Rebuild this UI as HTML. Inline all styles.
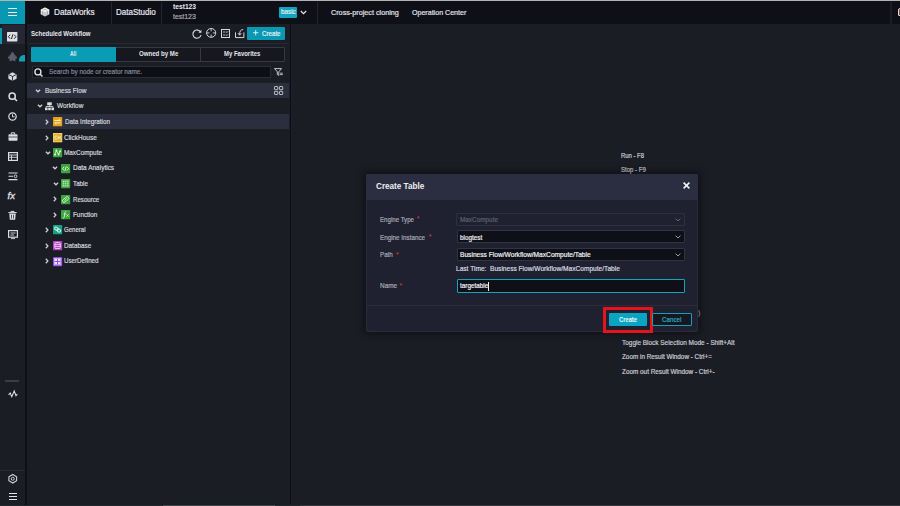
<!DOCTYPE html>
<html><head><meta charset="utf-8">
<style>
html,body{margin:0;padding:0}
body{width:900px;height:506px;overflow:hidden;position:relative;background:#1b1d25;font-family:"Liberation Sans",sans-serif}
.b{position:absolute;box-sizing:border-box}
.t{position:absolute;white-space:pre;line-height:1;transform-origin:0 0;font-family:"Liberation Sans",sans-serif}
svg{position:absolute;overflow:visible}
</style></head><body>
<!-- header -->
<div class="b" style="left:0;top:0;width:900px;height:1px;background:#b3b3b3"></div>
<div class="b" style="left:0;top:1px;width:900px;height:23px;background:#0e0f17"></div>
<div class="b" style="left:0;top:1px;width:24.5px;height:23px;background:#0898b2"></div>
<div class="b" style="left:8px;top:8.4px;width:9px;height:1.1px;background:#ececec"></div>
<div class="b" style="left:8px;top:11.55px;width:9px;height:1.1px;background:#ececec"></div>
<div class="b" style="left:8px;top:15px;width:9px;height:1.1px;background:#ececec"></div>
<div class="b" style="left:111px;top:2px;width:1px;height:22px;background:#24262e"></div>
<div class="b" style="left:161px;top:2px;width:1px;height:22px;background:#24262e"></div>
<div class="b" style="left:317px;top:2px;width:1px;height:22px;background:#24262e"></div>
<div class="b" style="left:890.2px;top:2px;width:2.2px;height:22px;background:#1b1c25"></div>
<svg style="left:40px;top:7px" width="10" height="10" viewBox="0 0 10 10"><path d="M5 0.4 L9.3 2.8 V7.2 L5 9.6 L0.7 7.2 V2.8 Z" fill="#eeeae4"/><path d="M5 0.4 L9.3 2.8 L5 5 L0.7 2.8Z" fill="#f6f4f0"/><path d="M2.4 3.9V7.9M4 4.8V9M6 4.8V9M7.6 3.9V7.9" stroke="#7b8aa0" stroke-width="0.7"/><path d="M3 3.2 L5 2.2 L7 3.2" stroke="#9a7a60" stroke-width="0.6" fill="none"/></svg>
<div class="b" style="left:279px;top:6.7px;width:18.3px;height:11.3px;background:#12a3bf;border-radius:1px"></div>
<svg style="left:300px;top:9.5px" width="7" height="5" viewBox="0 0 7 5"><path d="M0.8 1 L3.5 3.6 L6.2 1" stroke="#e8e8e8" stroke-width="1.2" fill="none"/></svg>
<div class="b" style="left:897.6px;top:8.2px;width:4px;height:7.7px;background:#8a4a2a;border:1px solid #d8dde6;border-radius:2px 0 0 1px"></div>

<!-- sidebar -->
<div class="b" style="left:0;top:24px;width:25px;height:482px;background:#1b1d25"></div>
<div class="b" style="left:2px;top:25px;width:23px;height:19px;background:#252834"></div>
<div class="b" style="left:0;top:28px;width:2px;height:16px;background:#0a9bb5"></div>
<div class="b" style="left:25px;top:24px;width:2px;height:482px;background:#0f1016"></div>
<div class="b" style="left:5px;top:380px;width:14px;height:1.5px;background:#3a3c48"></div>
<div class="b" style="left:0;top:470px;width:25px;height:1px;background:#272933"></div>
<!-- sidebar icons -->
<svg style="left:7px;top:31.7px" width="10.4" height="9.4" viewBox="0 0 10.4 9.4"><rect x="0" y="0" width="10.4" height="9.4" rx="0.6" fill="#dfe0e6"/><path d="M3.2 2.7 L1.4 4.7 L3.2 6.7 M7.2 2.7 L9 4.7 L7.2 6.7 M5.9 2.4 L4.5 7" stroke="#1e2030" stroke-width="1" fill="none"/></svg>
<svg style="left:7.7px;top:51.8px" width="9" height="9.4" viewBox="0 0 9 9.4"><g fill="#5c5e6d"><rect x="1.6" y="2.6" width="5.8" height="6.6"/><circle cx="4.5" cy="1.7" r="1.5"/><circle cx="1.3" cy="5.6" r="1.3"/><circle cx="7.7" cy="5.6" r="1.3"/></g><circle cx="4.5" cy="9.6" r="1.3" fill="#1b1d25"/></svg><svg style="left:18.6px;top:54.6px" width="6" height="6.4" viewBox="0 0 6 6.4"><path d="M0 6.4 V5 A5 5 0 0 1 5 0 H6 V6.4Z" fill="#12a0b8"/></svg>
<svg style="left:8px;top:71.5px" width="9" height="9" viewBox="0 0 9 9"><path d="M4.5 0.3 L8.6 2.4 V6.7 L4.5 8.8 L0.4 6.7 V2.4Z" fill="#d8d9e0"/><path d="M0.8 2.6 L4.5 4.5 L8.2 2.6 M4.5 4.5 V8.5" stroke="#1b1d25" stroke-width="0.9" fill="none"/></svg>
<svg style="left:8px;top:91.5px" width="10" height="10" viewBox="0 0 10 10"><circle cx="4.2" cy="4.2" r="3.1" stroke="#dcdde3" stroke-width="1.5" fill="none"/><path d="M6.5 6.5 L9 9" stroke="#dcdde3" stroke-width="1.6"/></svg>
<svg style="left:8px;top:111.5px" width="9" height="9" viewBox="0 0 9 9"><circle cx="4.5" cy="4.5" r="3.7" stroke="#dcdde3" stroke-width="1.2" fill="none"/><path d="M4.5 2.3 V4.8 H6.6" stroke="#dcdde3" stroke-width="1" fill="none"/></svg>
<svg style="left:7.5px;top:132px" width="10" height="9" viewBox="0 0 10 9"><rect x="0.5" y="2.2" width="9" height="6.5" rx="0.8" fill="#dcdde3"/><path d="M3.3 2.2 V0.8 H6.7 V2.2" stroke="#dcdde3" stroke-width="1" fill="none"/><path d="M0.5 5 H9.5" stroke="#1b1d25" stroke-width="0.7"/></svg>
<svg style="left:7.5px;top:151.5px" width="10" height="9" viewBox="0 0 10 9"><rect x="0.6" y="0.6" width="8.8" height="7.8" stroke="#dcdde3" stroke-width="1.2" fill="none"/><path d="M0.6 3 H9.4 M0.6 5.3 H9.4 M3.5 3 V8.4" stroke="#dcdde3" stroke-width="0.9"/></svg>
<svg style="left:7.5px;top:171.5px" width="10" height="9" viewBox="0 0 10 9"><path d="M0.5 1 H9.5 M0.5 4.3 H5 M0.5 7.6 H9.5" stroke="#dcdde3" stroke-width="1.1"/><circle cx="7.5" cy="4.3" r="1.4" stroke="#dcdde3" stroke-width="0.9" fill="none"/></svg>
<div class="t" style="left:7.5px;top:191px;font-size:9.5px;font-style:italic;color:#e2e3e8;-webkit-text-stroke:0.3px #e2e3e8;font-family:'Liberation Sans',sans-serif">fx</div>
<svg style="left:8px;top:210.5px" width="9" height="9" viewBox="0 0 9 9"><path d="M0.3 1.6 H8.7 M3 1.6 V0.4 H6 V1.6" stroke="#dcdde3" stroke-width="1" fill="none"/><path d="M1.3 2.6 H7.7 L7.2 8.8 H1.8Z" fill="#dcdde3"/><path d="M3.5 3.8 V7.5 M5.5 3.8 V7.5" stroke="#1b1d25" stroke-width="0.7"/></svg>
<svg style="left:7.5px;top:229.5px" width="10" height="9" viewBox="0 0 10 9"><rect x="0.6" y="0.6" width="8.8" height="6.6" stroke="#dcdde3" stroke-width="1.2" fill="none"/><path d="M2.5 3 H7.5 M2.5 5 H6 M3 8.6 H7" stroke="#dcdde3" stroke-width="0.9"/></svg>
<svg style="left:7.5px;top:389.5px" width="10" height="8" viewBox="0 0 10 8"><path d="M0.6 4.8 L2.2 3 L3.8 6.6 L6.2 1 L8 5.6 L9.4 4" stroke="#dcdde3" stroke-width="1.1" fill="none"/></svg>
<svg style="left:7.8px;top:474.2px" width="9.5" height="9.5" viewBox="0 0 9.5 9.5"><path d="M4.75 0.5 L8.6 2.7 V6.8 L4.75 9 L0.9 6.8 V2.7Z" stroke="#d0d1d8" stroke-width="1.1" fill="none"/><circle cx="4.75" cy="4.75" r="1.5" stroke="#d0d1d8" stroke-width="1" fill="none"/></svg>
<div class="b" style="left:8.5px;top:493.4px;width:8px;height:1.1px;background:#e4e5ea"></div><div class="b" style="left:8.5px;top:496px;width:8px;height:1.1px;background:#e4e5ea"></div><div class="b" style="left:8.5px;top:498.6px;width:8px;height:1.1px;background:#e4e5ea"></div>

<!-- panel -->
<div class="b" style="left:27px;top:43px;width:262px;height:1px;background:#262833"></div>
<div class="b" style="left:288.6px;top:24px;width:4px;height:482px;background:#1c1d29"></div><div class="b" style="left:289.6px;top:24px;width:1.9px;height:482px;background:#0d0e14"></div>
<svg style="left:191.5px;top:28.5px" width="10" height="10" viewBox="0 0 10 10"><path d="M8.6 3.2 A4.1 4.1 0 1 0 9 6" stroke="#d8d9df" stroke-width="1.1" fill="none"/><path d="M9.4 0.8 V3.8 H6.4Z" fill="#d8d9df"/></svg>
<svg style="left:205.9px;top:28.2px" width="10.3" height="9.8" viewBox="0 0 10.3 9.8"><ellipse cx="5.15" cy="4.9" rx="4.6" ry="4.4" stroke="#d8d9df" stroke-width="1" fill="none"/><path d="M5.15 0.5 V3.3 M5.15 6.5 V9.3 M0.5 4.9 H3.4 M6.9 4.9 H9.8" stroke="#d8d9df" stroke-width="0.9"/></svg>
<svg style="left:221px;top:28.8px" width="9" height="9" viewBox="0 0 9 9"><rect x="0.5" y="0.5" width="8" height="8" stroke="#d8d9df" stroke-width="1" fill="none"/><path d="M2 3 H4.5 M2 6 H4.5 M5.2 2.8 L6 3.6 L7.2 2.2 M5.2 5.8 L6 6.6 L7.2 5.2" stroke="#d8d9df" stroke-width="0.8" fill="none"/></svg>
<svg style="left:234.8px;top:28.8px" width="9.4" height="9.2" viewBox="0 0 9.4 9.2"><path d="M0.5 3.4 V8.6 H8.9 V3.4" stroke="#d8d9df" stroke-width="1" fill="none"/><path d="M8.2 0.6 C5.8 0.6 4.6 2 4.6 5.6 M3 4.2 L4.6 6.2 L6.2 4.2" stroke="#d8d9df" stroke-width="1" fill="none"/></svg>
<div class="b" style="left:247px;top:27px;width:38px;height:13px;background:#0a98b3;border-radius:1px"></div>
<svg style="left:253px;top:30.3px" width="5.4" height="5.4" viewBox="0 0 5.4 5.4"><path d="M2.7 0 V5.4 M0 2.7 H5.4" stroke="#e6f4f8" stroke-width="0.9"/></svg>
<!-- tabs -->
<div class="b" style="left:31px;top:47.3px;width:254px;height:14.5px;background:#16171f;border:1px solid #363845;border-radius:1px"></div>
<div class="b" style="left:31px;top:47.3px;width:85px;height:14.5px;background:#0a9bb5;border-radius:1px 0 0 1px"></div>
<div class="b" style="left:200.3px;top:47.3px;width:1px;height:14.5px;background:#363845"></div>
<!-- search -->
<div class="b" style="left:31.5px;top:65.5px;width:239px;height:12.7px;background:#0e0f16;border:1px solid #2a2c37"></div>
<svg style="left:34px;top:67.5px" width="9" height="9" viewBox="0 0 9 9"><circle cx="3.9" cy="3.9" r="3" stroke="#e0e1e6" stroke-width="1.4" fill="none"/><path d="M6 6 L8.5 8.5" stroke="#e0e1e6" stroke-width="1.5"/></svg>
<svg style="left:273.5px;top:68px" width="9" height="8" viewBox="0 0 9 8"><path d="M0.5 0.6 H7.5 L4.8 3.8 V7.4 L3.3 6.4 V3.8Z" stroke="#d8d9df" stroke-width="0.9" fill="none"/><path d="M6 5.2 H8.8 M6 6.6 H8.8" stroke="#d8d9df" stroke-width="0.8"/></svg>
<!-- tree -->
<div class="b" style="left:27px;top:83px;width:262px;height:15.4px;background:#2b2e3c"></div>
<div class="b" style="left:27px;top:113.8px;width:262px;height:15.3px;background:#2b2e3c"></div>
<svg style="left:273.6px;top:86.3px" width="9.2" height="9" viewBox="0 0 9.2 9"><g stroke="#cfd0d7" stroke-width="0.9" fill="none"><rect x="0.5" y="0.5" width="3.3" height="3.2" rx="0.6"/><rect x="5.4" y="0.5" width="3.3" height="3.2" rx="0.6"/><rect x="0.5" y="5.3" width="3.3" height="3.2" rx="0.6"/><rect x="5.4" y="5.3" width="3.3" height="3.2" rx="0.6"/></g></svg>
<!-- chevrons down -->
<svg style="left:34.6px;top:88.8px" width="6" height="4" viewBox="0 0 6 4"><path d="M0.9 0.7 L3 2.8 L5.1 0.7" stroke="#d0d1d8" stroke-width="1.25" fill="none"/></svg>
<svg style="left:36.9px;top:104.3px" width="6" height="4" viewBox="0 0 6 4"><path d="M0.9 0.7 L3 2.8 L5.1 0.7" stroke="#d0d1d8" stroke-width="1.25" fill="none"/></svg>
<svg style="left:44.8px;top:150.9px" width="6" height="4" viewBox="0 0 6 4"><path d="M0.9 0.7 L3 2.8 L5.1 0.7" stroke="#d0d1d8" stroke-width="1.25" fill="none"/></svg>
<svg style="left:52.3px;top:166.4px" width="6" height="4" viewBox="0 0 6 4"><path d="M0.9 0.7 L3 2.8 L5.1 0.7" stroke="#d0d1d8" stroke-width="1.25" fill="none"/></svg>
<svg style="left:52.6px;top:181.9px" width="6" height="4" viewBox="0 0 6 4"><path d="M0.9 0.7 L3 2.8 L5.1 0.7" stroke="#d0d1d8" stroke-width="1.25" fill="none"/></svg>
<!-- chevrons right -->
<svg style="left:45.4px;top:119px" width="4" height="6" viewBox="0 0 4 6"><path d="M0.8 0.8 L2.9 3 L0.8 5.2" stroke="#d0d1d8" stroke-width="1.25" fill="none"/></svg>
<svg style="left:45.4px;top:134.5px" width="4" height="6" viewBox="0 0 4 6"><path d="M0.8 0.8 L2.9 3 L0.8 5.2" stroke="#d0d1d8" stroke-width="1.25" fill="none"/></svg>
<svg style="left:52.6px;top:196.4px" width="4" height="6" viewBox="0 0 4 6"><path d="M0.8 0.8 L2.9 3 L0.8 5.2" stroke="#d0d1d8" stroke-width="1.25" fill="none"/></svg>
<svg style="left:52.6px;top:211.9px" width="4" height="6" viewBox="0 0 4 6"><path d="M0.8 0.8 L2.9 3 L0.8 5.2" stroke="#d0d1d8" stroke-width="1.25" fill="none"/></svg>
<svg style="left:45.2px;top:227.3px" width="4" height="6" viewBox="0 0 4 6"><path d="M0.8 0.8 L2.9 3 L0.8 5.2" stroke="#d0d1d8" stroke-width="1.25" fill="none"/></svg>
<svg style="left:45.2px;top:242.8px" width="4" height="6" viewBox="0 0 4 6"><path d="M0.8 0.8 L2.9 3 L0.8 5.2" stroke="#d0d1d8" stroke-width="1.25" fill="none"/></svg>
<svg style="left:45.2px;top:258.3px" width="4" height="6" viewBox="0 0 4 6"><path d="M0.8 0.8 L2.9 3 L0.8 5.2" stroke="#d0d1d8" stroke-width="1.25" fill="none"/></svg>
<!-- workflow icon -->
<svg style="left:45px;top:101.8px" width="9" height="8.4" viewBox="0 0 9 8.4"><rect x="2.2" y="0.3" width="4.6" height="3" fill="#dcdde3"/><path d="M4.5 3.3 V4.8 M1 5.4 V4.6 H8 V5.4" stroke="#dcdde3" stroke-width="0.9" fill="none"/><rect x="0" y="5.6" width="2.6" height="2.6" fill="#dcdde3"/><rect x="3.2" y="5.6" width="2.6" height="2.6" fill="#dcdde3"/><rect x="6.4" y="5.6" width="2.6" height="2.6" fill="#dcdde3"/></svg>
<!-- node icons -->
<svg style="left:53px;top:117px" width="9.2" height="9.2" viewBox="0 0 9 9"><rect width="9" height="9" rx="0.5" fill="#e7a11b"/><path d="M1.5 3.4 H7.3 M5.8 2 L7.3 3.4 M7.5 5.8 H1.7 M3.2 7.2 L1.7 5.8" stroke="#fdf1d8" stroke-width="0.9" fill="none"/></svg>
<svg style="left:53px;top:132.8px" width="9.2" height="9.2" viewBox="0 0 9 9"><rect width="9" height="9" rx="0.6" fill="#e0b32a"/><rect x="0.4" y="0.4" width="8.2" height="8.2" stroke="#f2d985" stroke-width="0.7" fill="none"/><path d="M2 3 H4 M2 3 V6 H4 M5 3 V6 M7 3 V6 M5 4.5 H7" stroke="#fbeec0" stroke-width="0.8" fill="none"/></svg>
<svg style="left:53px;top:148.3px" width="9.2" height="9.2" viewBox="0 0 9 9"><rect width="9" height="9" rx="0.6" fill="#3aa63a"/><path d="M2 6.5 L3.3 2.3 L5.5 6.3 L7 3.2" stroke="#e8f6e8" stroke-width="0.8" fill="none"/><g fill="#f0faf0"><circle cx="2" cy="6.5" r="0.9"/><circle cx="3.3" cy="2.3" r="0.9"/><circle cx="5.5" cy="6.3" r="0.9"/><circle cx="7" cy="3.2" r="0.9"/></g></svg>
<svg style="left:61px;top:163.7px" width="9.2" height="9.2" viewBox="0 0 9 9"><rect width="9" height="9" rx="0.6" fill="#3aa63a"/><path d="M3 2.8 L1.6 4.5 L3 6.2 M6 2.8 L7.4 4.5 L6 6.2 M5.1 2.4 L3.9 6.6" stroke="#eef8ee" stroke-width="0.9" fill="none"/></svg>
<svg style="left:61px;top:179.2px" width="9.2" height="9.2" viewBox="0 0 9 9"><rect width="9" height="9" rx="0.6" fill="#3aa63a"/><rect x="1.6" y="1.6" width="5.8" height="5.8" fill="#b9e0b9"/><path d="M3.55 1.6 V7.4 M5.45 1.6 V7.4 M1.6 3.55 H7.4 M1.6 5.45 H7.4" stroke="#3aa63a" stroke-width="0.55"/></svg>
<svg style="left:61px;top:194.7px" width="9.2" height="9.2" viewBox="0 0 9 9"><rect width="9" height="9" rx="0.6" fill="#3aa63a"/><g transform="rotate(-40 4.5 4.5)" stroke="#d6eed6" stroke-width="0.9" fill="none"><rect x="1" y="3" width="7" height="3" rx="1.5"/><path d="M3 4.5 H6"/></g></svg>
<svg style="left:61px;top:210.2px" width="9.2" height="9.2" viewBox="0 0 9 9"><rect width="9" height="9" rx="0.6" fill="#3aa63a"/><path d="M5 1.5 C4 1.3 3.8 2.2 3.6 4 L3.2 7 C3 7.9 2.5 8 1.8 7.8 M2.5 3.8 H4.8" stroke="#e0f2e0" stroke-width="0.8" fill="none"/><path d="M5.3 4.3 L7.3 6.5 M7.3 4.3 L5.3 6.5" stroke="#e0f2e0" stroke-width="0.8"/></svg>
<svg style="left:53px;top:225.4px" width="9.2" height="9.2" viewBox="0 0 9 9"><rect width="9" height="9" rx="0.6" fill="#16a287"/><g transform="rotate(35 4.5 4.5)" stroke="#def4ed" stroke-width="0.95" fill="none"><ellipse cx="3.1" cy="4.5" rx="1.9" ry="1.4"/><ellipse cx="5.9" cy="4.5" rx="1.9" ry="1.4"/></g></svg>
<svg style="left:53px;top:241px" width="9.2" height="9.2" viewBox="0 0 9 9"><rect width="9" height="9" rx="0.6" fill="#b344c2"/><rect x="1.8" y="1.6" width="5.4" height="5.8" rx="1" stroke="#f2dcf5" stroke-width="0.85" fill="none"/><path d="M1.8 3.55 H7.2 M1.8 5.45 H7.2" stroke="#f2dcf5" stroke-width="0.8"/></svg>
<svg style="left:53px;top:256.6px" width="9.2" height="9.2" viewBox="0 0 9 9"><rect width="9" height="9" rx="0.6" fill="#8b49dc"/><rect x="1.3" y="1.3" width="6.4" height="6.4" stroke="#d9c8f6" stroke-width="0.7" fill="none"/><path d="M1.8 1.8 H4 V4 H1.8Z M5 1.8 H7.2 V4 H5Z M1.8 5 H4 V7.2 H1.8Z M5 5 H7.2 V7.2 H5Z" fill="#ece2fb"/></svg>

<!-- main area scrollbar -->
<div class="b" style="left:0;top:505px;width:900px;height:1px;background:#34363b"></div><div class="b" style="left:0;top:505px;width:300px;height:1px;background:#1d2a30"></div><div class="b" style="left:163px;top:505px;width:112px;height:1px;background:#3e454b"></div>
<div class="t" style="left:698px;top:309.3px;font-size:7px;color:#c4c5cc">)</div>

<div class="t" style="left:54.20px;top:8.30px;font-size:9px;font-weight:400;color:#e8e8ee;-webkit-text-stroke:0.2px #e8e8ee;transform:scaleX(0.914)">DataWorks</div>
<div class="t" style="left:116.00px;top:8.30px;font-size:9px;font-weight:400;color:#e8e8ee;-webkit-text-stroke:0.2px #e8e8ee;transform:scaleX(0.893)">DataStudio</div>
<div class="t" style="left:173.20px;top:3.30px;font-size:7px;font-weight:700;color:#ececf0;-webkit-text-stroke:0.0px #ececf0;transform:scaleX(0.954)">test123</div>
<div class="t" style="left:173.20px;top:13.10px;font-size:7px;font-weight:400;color:#a8a9b0;-webkit-text-stroke:0.2px #a8a9b0;transform:scaleX(0.996)">test123</div>
<div class="t" style="left:280.50px;top:8.40px;font-size:7.5px;font-weight:400;color:#e2edf2;-webkit-text-stroke:0.2px #e2edf2;transform:scaleX(0.844)">basic</div>
<div class="t" style="left:331.10px;top:8.50px;font-size:7.5px;font-weight:400;color:#e0e1e6;-webkit-text-stroke:0.2px #e0e1e6;transform:scaleX(0.963)">Cross-project cloning</div>
<div class="t" style="left:412.30px;top:8.50px;font-size:7.5px;font-weight:400;color:#e0e1e6;-webkit-text-stroke:0.2px #e0e1e6;transform:scaleX(0.943)">Operation Center</div>
<div class="t" style="left:31.10px;top:29.50px;font-size:7.5px;font-weight:700;color:#e6e7ec;-webkit-text-stroke:0.0px #e6e7ec;transform:scaleX(0.809)">Scheduled Workflow</div>
<div class="t" style="left:261.60px;top:29.50px;font-size:7.5px;font-weight:400;color:#e6f4f8;-webkit-text-stroke:0.2px #e6f4f8;transform:scaleX(0.823)">Create</div>
<div class="t" style="left:70.30px;top:50.10px;font-size:7px;font-weight:700;color:#e0ecf0;-webkit-text-stroke:0.0px #e0ecf0;transform:scaleX(0.711)">All</div>
<div class="t" style="left:138.60px;top:50.30px;font-size:7px;font-weight:700;color:#e4e5ea;-webkit-text-stroke:0.0px #e4e5ea;transform:scaleX(0.871)">Owned by Me</div>
<div class="t" style="left:224.20px;top:50.30px;font-size:7px;font-weight:700;color:#e4e5ea;-webkit-text-stroke:0.0px #e4e5ea;transform:scaleX(0.851)">My Favorites</div>
<div class="t" style="left:49.20px;top:67.90px;font-size:7px;font-weight:400;color:#85889a;-webkit-text-stroke:0.2px #85889a;transform:scaleX(0.909)">Search by node or creator name.</div>
<div class="t" style="left:44.50px;top:86.80px;font-size:7px;font-weight:400;color:#d4d5dc;-webkit-text-stroke:0.2px #d4d5dc;transform:scaleX(0.918)">Business Flow</div>
<div class="t" style="left:57.00px;top:102.30px;font-size:7px;font-weight:400;color:#d4d5dc;-webkit-text-stroke:0.2px #d4d5dc;transform:scaleX(0.917)">Workflow</div>
<div class="t" style="left:64.70px;top:117.80px;font-size:7px;font-weight:400;color:#d4d5dc;-webkit-text-stroke:0.2px #d4d5dc;transform:scaleX(0.904)">Data Integration</div>
<div class="t" style="left:64.20px;top:133.60px;font-size:7px;font-weight:400;color:#d4d5dc;-webkit-text-stroke:0.2px #d4d5dc;transform:scaleX(0.926)">ClickHouse</div>
<div class="t" style="left:64.20px;top:149.00px;font-size:7px;font-weight:400;color:#d4d5dc;-webkit-text-stroke:0.2px #d4d5dc;transform:scaleX(0.912)">MaxCompute</div>
<div class="t" style="left:72.50px;top:164.40px;font-size:7px;font-weight:400;color:#d4d5dc;-webkit-text-stroke:0.2px #d4d5dc;transform:scaleX(0.927)">Data Analytics</div>
<div class="t" style="left:72.50px;top:179.70px;font-size:7px;font-weight:400;color:#d4d5dc;-webkit-text-stroke:0.2px #d4d5dc;transform:scaleX(0.894)">Table</div>
<div class="t" style="left:72.50px;top:195.50px;font-size:7px;font-weight:400;color:#d4d5dc;-webkit-text-stroke:0.2px #d4d5dc;transform:scaleX(0.877)">Resource</div>
<div class="t" style="left:72.50px;top:211.00px;font-size:7px;font-weight:400;color:#d4d5dc;-webkit-text-stroke:0.2px #d4d5dc;transform:scaleX(0.904)">Function</div>
<div class="t" style="left:64.20px;top:226.20px;font-size:7px;font-weight:400;color:#d4d5dc;-webkit-text-stroke:0.2px #d4d5dc;transform:scaleX(0.864)">General</div>
<div class="t" style="left:64.20px;top:241.80px;font-size:7px;font-weight:400;color:#d4d5dc;-webkit-text-stroke:0.2px #d4d5dc;transform:scaleX(0.907)">Database</div>
<div class="t" style="left:64.20px;top:257.20px;font-size:7px;font-weight:400;color:#d4d5dc;-webkit-text-stroke:0.2px #d4d5dc;transform:scaleX(0.887)">UserDefined</div>
<div class="t" style="left:621.30px;top:151.50px;font-size:7px;font-weight:400;color:#cbccd3;-webkit-text-stroke:0.2px #cbccd3;transform:scaleX(0.844)">Run - F8</div>
<div class="t" style="left:621.30px;top:165.70px;font-size:7px;font-weight:400;color:#cbccd3;-webkit-text-stroke:0.2px #cbccd3;transform:scaleX(0.862)">Stop - F9</div>
<div class="t" style="left:621.60px;top:339.10px;font-size:7px;font-weight:400;color:#cbccd3;-webkit-text-stroke:0.2px #cbccd3;transform:scaleX(0.920)">Toggle Block Selection Mode - Shift+Alt</div>
<div class="t" style="left:621.60px;top:353.30px;font-size:7px;font-weight:400;color:#cbccd3;-webkit-text-stroke:0.2px #cbccd3;transform:scaleX(0.906)">Zoom in Result Window - Ctrl+=</div>
<div class="t" style="left:621.60px;top:367.50px;font-size:7px;font-weight:400;color:#cbccd3;-webkit-text-stroke:0.2px #cbccd3;transform:scaleX(0.910)">Zoom out Result Window - Ctrl+-</div>

<!-- modal -->
<div class="b" style="left:365.8px;top:173.8px;width:332.6px;height:158.6px;background:#1f2130;border:1px solid #2a2c3a;border-radius:2px;box-shadow:0 0 10px 2px rgba(0,0,0,0.45)"></div>
<div class="b" style="left:365.8px;top:173.8px;width:332.6px;height:26.2px;background:#2b2e40;border-radius:2px 2px 0 0"></div>
<div class="b" style="left:366.5px;top:304.8px;width:331.5px;height:1.4px;background:#2a2c3b"></div>
<svg style="left:683.3px;top:181.8px" width="7" height="7" viewBox="0 0 7 7"><path d="M0.6 0.6 L6.4 6.4 M6.4 0.6 L0.6 6.4" stroke="#f4f4f6" stroke-width="1.5"/></svg>
<div class="b" style="left:456.2px;top:213px;width:228.5px;height:12.8px;background:#1f2130;border:1px solid #2e313d;border-radius:1px"></div>
<div class="b" style="left:456.5px;top:230.4px;width:228.2px;height:13px;background:#0f1017;border:1px solid #313442;border-radius:1px"></div>
<div class="b" style="left:456.5px;top:248.3px;width:228.2px;height:13px;background:#0f1017;border:1px solid #313442;border-radius:1px"></div>
<div class="b" style="left:456.5px;top:279.4px;width:228.2px;height:13.3px;background:#0f1017;border:1px solid #17a2be;border-radius:1px"></div>
<div class="b" style="left:488.2px;top:281.5px;width:0.9px;height:9.5px;background:#f0f0f0"></div>
<svg style="left:674.5px;top:217.8px" width="6" height="4" viewBox="0 0 6 4"><path d="M0.6 0.6 L3 3 L5.4 0.6" stroke="#6a6d7a" stroke-width="0.9" fill="none"/></svg>
<svg style="left:674.5px;top:235.3px" width="6" height="4" viewBox="0 0 6 4"><path d="M0.6 0.6 L3 3 L5.4 0.6" stroke="#a9abb5" stroke-width="0.9" fill="none"/></svg>
<svg style="left:674.5px;top:253.2px" width="6" height="4" viewBox="0 0 6 4"><path d="M0.6 0.6 L3 3 L5.4 0.6" stroke="#a9abb5" stroke-width="0.9" fill="none"/></svg>
<!-- asterisks -->
<div class="t" style="left:416.8px;top:215px;font-size:7px;color:#e03a42">*</div>
<div class="t" style="left:428.8px;top:233px;font-size:7px;color:#e03a42">*</div>
<div class="t" style="left:396px;top:251px;font-size:7px;color:#e03a42">*</div>
<div class="t" style="left:399.5px;top:281.5px;font-size:7px;color:#e03a42">*</div>
<!-- buttons -->
<div class="b" style="left:602.8px;top:306.8px;width:50px;height:26px;border:3px solid #e5141c"></div>
<div class="b" style="left:608.9px;top:313px;width:38.3px;height:13.3px;background:#0aa5c3;border-radius:1px"></div>
<div class="b" style="left:652.2px;top:313px;width:39.5px;height:13px;background:#17181f;border:1px solid #16a0bc;border-radius:1px"></div>
<div class="t" style="left:375.50px;top:182.20px;font-size:9px;font-weight:700;color:#eceef2;-webkit-text-stroke:0.0px #eceef2;transform:scaleX(0.904)">Create Table</div>
<div class="t" style="left:380.10px;top:215.90px;font-size:7.5px;font-weight:400;color:#a8aab5;-webkit-text-stroke:0.2px #a8aab5;transform:scaleX(0.817)">Engine Type</div>
<div class="t" style="left:380.10px;top:233.70px;font-size:7.5px;font-weight:400;color:#a8aab5;-webkit-text-stroke:0.2px #a8aab5;transform:scaleX(0.837)">Engine Instance</div>
<div class="t" style="left:380.10px;top:251.30px;font-size:7.5px;font-weight:400;color:#a8aab5;-webkit-text-stroke:0.2px #a8aab5;transform:scaleX(0.827)">Path</div>
<div class="t" style="left:380.10px;top:282.00px;font-size:7.5px;font-weight:400;color:#a8aab5;-webkit-text-stroke:0.2px #a8aab5;transform:scaleX(0.855)">Name</div>
<div class="t" style="left:460.10px;top:215.90px;font-size:7.5px;font-weight:400;color:#5e6170;-webkit-text-stroke:0.2px #5e6170;transform:scaleX(0.851)">MaxCompute</div>
<div class="t" style="left:460.10px;top:233.70px;font-size:7.5px;font-weight:400;color:#f2f2f6;-webkit-text-stroke:0.2px #f2f2f6;transform:scaleX(0.848)">blogtest</div>
<div class="t" style="left:460.30px;top:251.10px;font-size:7.5px;font-weight:400;color:#f2f2f6;-webkit-text-stroke:0.2px #f2f2f6;transform:scaleX(0.884)">Business Flow/Workflow/MaxCompute/Table</div>
<div class="t" style="left:456.30px;top:264.60px;font-size:7.5px;font-weight:400;color:#dadbe2;-webkit-text-stroke:0.2px #dadbe2;transform:scaleX(0.878)">Last Time:  Business Flow/Workflow/MaxCompute/Table</div>
<div class="t" style="left:460.30px;top:282.00px;font-size:7.5px;font-weight:400;color:#f2f2f6;-webkit-text-stroke:0.2px #f2f2f6;transform:scaleX(0.848)">targetable</div>
<div class="t" style="left:619.00px;top:316.00px;font-size:7.5px;font-weight:700;color:#f0f7fa;-webkit-text-stroke:0.0px #f0f7fa;transform:scaleX(0.771)">Create</div>
<div class="t" style="left:662.30px;top:316.00px;font-size:7.5px;font-weight:400;color:#26aeca;-webkit-text-stroke:0.2px #26aeca;transform:scaleX(0.835)">Cancel</div>
</body></html>
